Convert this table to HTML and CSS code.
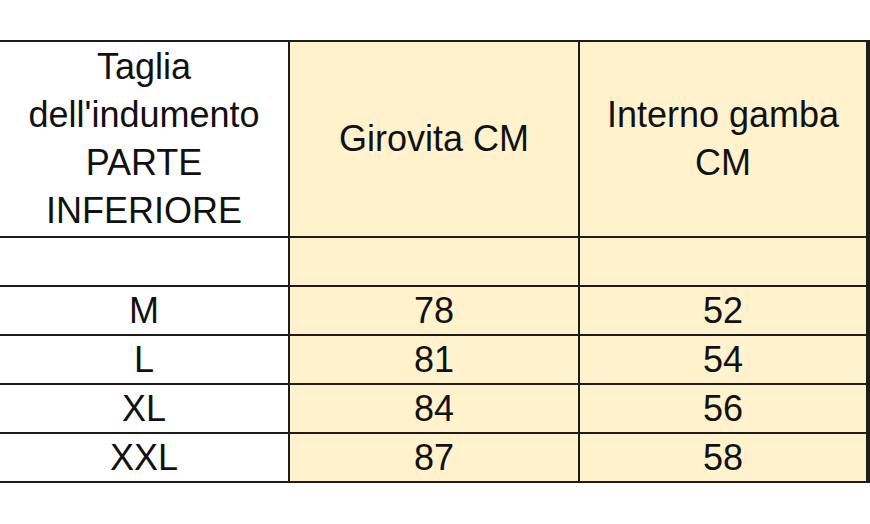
FILE: index.html
```html
<!DOCTYPE html>
<html lang="it">
<head>
<meta charset="utf-8">
<title>Tabella taglie</title>
<link rel="stylesheet" href="styles.css">
</head>
<body>
<div class="sheet">
  <div class="cell head">Taglia<br>dell'indumento<br>PARTE<br>INFERIORE</div>
  <div class="cell head gold">Girovita CM</div>
  <div class="cell head gold">Interno gamba<br>CM</div>

  <div class="cell"></div>
  <div class="cell gold"></div>
  <div class="cell gold"></div>

  <div class="cell">M</div>
  <div class="cell gold">78</div>
  <div class="cell gold">52</div>

  <div class="cell">L</div>
  <div class="cell gold">81</div>
  <div class="cell gold">54</div>

  <div class="cell">XL</div>
  <div class="cell gold">84</div>
  <div class="cell gold">56</div>

  <div class="cell">XXL</div>
  <div class="cell gold">87</div>
  <div class="cell gold">58</div>
</div>
</body>
</html>
```
FILE: styles.css
```css
html, body {
  margin: 0;
  padding: 0;
  background: #ffffff;
}

body {
  font-family: "Liberation Sans", Arial, sans-serif;
  color: #111111;
}

.sheet {
  margin-top: 40px;
  width: 868px;
  display: grid;
  grid-template-columns: 288px 288px 286px;
  grid-template-rows: 194px repeat(5, 47px);
  gap: 2px;
  padding: 2px 2px 2px 0;
  background: #1c1c1c;
  box-sizing: content-box;
}

.cell {
  background: #ffffff;
  display: flex;
  align-items: center;
  justify-content: center;
  text-align: center;
  font-size: 36px;
  line-height: 48px;
  transform-origin: center;
}

.cell.head {
  line-height: 48px;
}

.gold {
  background: #fff2cc;
}
```
